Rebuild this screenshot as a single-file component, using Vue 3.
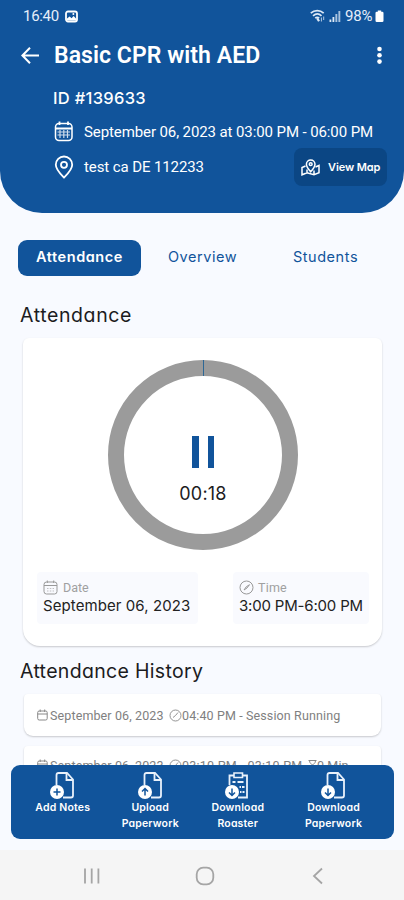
<script setup>
const tabs = ['Attendance', 'Overview', 'Students']
const actions = [
  { key: 'notes', lines: ['Add Notes'] },
  { key: 'upload', lines: ['Upload', 'Paperwork'] },
  { key: 'roaster', lines: ['Download', 'Roaster'] },
  { key: 'download', lines: ['Download', 'Paperwork'] },
]
const badge = {
  notes: 'M4.500 21h7M8 17.500v7',
  upload: 'M8 24.500v-7M5 20.500l3-3 3 3',
  roaster: 'M8 17.500v7M5 21.500l3 3 3-3',
  download: 'M8 17.500v7M5 21.500l3 3 3-3',
}
</script>

<template>
  <div class="screen">
    <header class="header">
      <div class="status">
        <span class="clock">16:40</span>
        <svg class="picture" width="13" height="13" viewBox="0 0 13 13">
          <rect x="1" y="1.500" width="11" height="10" rx="2" fill="none" stroke="#fff" stroke-width="1.800" />
          <path d="M2 10.500V8.600l2.600-2.100 2 1.800 2-2.200L11 8.500v2z" fill="#fff" />
          <circle cx="8.400" cy="4" r="1" fill="#fff" />
        </svg>
        <span class="grow"></span>
        <svg width="16" height="14" viewBox="0 0 16 14" fill="none" stroke="#dce8f6" stroke-width="1.700">
          <path d="M.8 4.200C4.500.7 10 .7 13.700 4.200M3 6.800c2.600-2.300 6-2.300 8.500 0M5.200 9.200c1.300-1.100 2.800-1.100 4 0" />
          <path d="M7.200 9.200 9 12.200" stroke-width="2.200" />
          <path d="M11.400 12.500V8.500M13.700 7.500V11" stroke-width="1" opacity=".8" />
        </svg>
        <svg class="signal" width="12" height="12" viewBox="0 0 12 12" fill="#dce8f6">
          <path d="M.5 9.400h1.800V12H.5zM3.500 7h1.800v5H3.500z" />
          <path d="M6.400 4h1.900v8H6.400zM9.400 1h1.900v11H9.400z" opacity=".75" />
        </svg>
        <span class="percent">98%</span>
        <svg class="battery" width="9" height="13" viewBox="0 0 9 13" fill="#fff">
          <path d="M2.800.5h3.400v1.300h1A1.300 1.300 0 0 1 8.500 3.100v7.600A1.300 1.300 0 0 1 7.200 12H1.800A1.300 1.300 0 0 1 .5 10.700V3.100A1.300 1.300 0 0 1 1.800 1.800h1z" />
        </svg>
      </div>
      <div class="titlebar">
        <svg width="20" height="20" viewBox="0 0 20 20" fill="none" stroke="#fff" stroke-width="2">
          <path d="M18 9.500H2M9 1.800 1.400 9.500 9 17.200" />
        </svg>
        <h1>Basic CPR with AED</h1>
        <svg class="more" width="6" height="20" viewBox="0 0 6 20" fill="#fff">
          <circle cx="3.500" cy="3" r="2.300" /><circle cx="3.500" cy="9.300" r="2.300" /><circle cx="3.500" cy="15.600" r="2.300" />
        </svg>
      </div>
      <div class="code geo">ID #139633</div>
      <div class="info">
        <svg width="20" height="21" viewBox="0 0 20 21" fill="none" stroke="#fff">
          <rect x="1.500" y="2.500" width="16.500" height="17" rx="3.500" stroke-width="1.500" />
          <path d="M1.500 7.500h16.500M5.500.5v3.500M14 .5v3.500" stroke-width="1.800" />
          <path d="M3.500 11h12.500M3.500 14h12.500M6 9v8M9.800 9v8M13.500 9v8" stroke-width="1.200" opacity=".8" />
        </svg>
        <span class="when">September 06, 2023 at 03:00 PM - 06:00 PM</span>
      </div>
      <div class="info place">
        <svg width="20" height="24" viewBox="0 0 20 24" fill="none" stroke="#fff" stroke-width="1.800">
          <path d="M10 22.500C6 18.500 1.800 14.500 1.800 9.700a8.200 8.200 0 0 1 16.400 0c0 4.800-4.200 8.800-8.200 12.800z" />
          <circle cx="10" cy="9.800" r="3" />
        </svg>
        <span class="where">test ca DE 112233</span>
        <button class="map">
          <svg width="19" height="17" viewBox="0 0 19 17" fill="none" stroke="#fff" stroke-width="1.500">
            <path d="M4.500 7 1 8.500v7.300l5-2 7 2 5-2V6.500L14.500 8M6 10.500v3.300M13 11.500v4.300" />
            <path d="M9.700 12.800C7.500 10.300 5.400 8 5.400 5.200a4.300 4.300 0 0 1 8.600 0c0 2.800-2.100 5.100-4.300 7.600z" />
            <circle cx="9.700" cy="5.200" r="1.400" />
          </svg>
          <span class="geo">View Map</span>
        </button>
      </div>
    </header>

    <main class="content">
      <nav class="tabs geo">
        <button v-for="(tab, i) in tabs" :key="tab" :class="['tab', { active: i === 0 }]">{{ tab }}</button>
      </nav>
      <h2 class="geo heading">Attendance</h2>
      <section class="card">
        <div class="timer">
          <div class="pause"><i></i><i></i></div>
          <div class="elapsed geo">00:18</div>
        </div>
        <div class="facts">
          <div class="fact date">
            <div class="label">
              <svg width="15" height="15" viewBox="0 0 15 15" fill="none" stroke="#999">
                <rect x="1" y="2" width="13" height="12" rx="2.500" />
                <path d="M1 5.500h13M4.300.5v2.500M10.700.5v2.500" />
                <path d="M4 8.500h7M4 11h7" stroke-dasharray="1.500 1.300" opacity=".6" />
              </svg>
              <span>Date</span>
            </div>
            <div class="value">September 06, 2023</div>
          </div>
          <div class="fact time">
            <div class="label">
              <svg width="15" height="15" viewBox="0 0 15 15" fill="none" stroke="#999">
                <circle cx="7.500" cy="7.500" r="6.500" />
                <path d="m5 10 2.200-3.200L10.500 4.700 8 8z" />
              </svg>
              <span>Time</span>
            </div>
            <div class="value">3:00 PM-6:00 PM</div>
          </div>
        </div>
      </section>
      <h2 class="geo heading history">Attendance History</h2>
      <div class="entry">
        <svg class="cal" width="11" height="12" viewBox="0 0 11 12" fill="none" stroke="#888"><rect x=".7" y="2" width="9.500" height="9" rx="1.500" /><path d="M.7 5h9.500M3.200.5V3M7.700.5V3" /></svg>
        <span class="day">September 06, 2023</span>
        <svg class="clk" width="13" height="13" viewBox="0 0 13 13" fill="none" stroke="#888" stroke-width=".9"><circle cx="6.500" cy="6.500" r="5.500" /><path d="M9 3.500 6.500 6.500 4 8.500" /></svg>
        <span class="state">04:40 PM - Session Running</span>
      </div>
      <div class="entry second">
        <svg class="cal" width="11" height="12" viewBox="0 0 11 12" fill="none" stroke="#888"><rect x=".7" y="2" width="9.500" height="9" rx="1.500" /><path d="M.7 5h9.500M3.200.5V3M7.700.5V3" /></svg>
        <span class="day">September 06, 2023</span>
        <svg class="clk" width="13" height="13" viewBox="0 0 13 13" fill="none" stroke="#888" stroke-width=".9"><circle cx="6.500" cy="6.500" r="5.500" /><path d="M9 3.500 6.500 6.500 4 8.500" /></svg>
        <span class="state range">03:10 PM - 03:10 PM</span>
        <svg class="glass" width="9" height="12" viewBox="0 0 9 12" fill="none" stroke="#888"><path d="M.5 1.500h8M.5 10.500h8M1.500 1.500c0 3 2 3.500 3 4.500 1-1 3-1.500 3-4.500M1.500 10.500c0-3 2-3.500 3-4.500 1 1 3 1.500 3 4.500" /></svg>
        <span class="state">0 Min</span>
      </div>
    </main>

    <div class="actions geo">
      <button v-for="a in actions" :key="a.key" :class="['action', a.key]">
        <svg width="26" height="28" viewBox="0 0 26 28" fill="none" stroke="#e9f1fb" stroke-width="1.800">
          <template v-if="a.key === 'roaster'">
            <path d="M5.500 14V4.500h17.500V26.500H14" />
            <path d="M10 2h8.500v4.500H10z" fill="#11549b" stroke-width="1.600" />
            <path d="M8.500 11h3M13.500 11h6M15.500 16h1.500M18 16h2.500M16 21h1.500M18.500 21h2" stroke-width="2" />
          </template>
          <template v-else>
            <path d="M7.500 14V4q0-2 2-2h8.500l6 6.500v16q0 2-2 2H14" />
            <path d="M17.500 2v7h6.500" />
          </template>
          <circle cx="8" cy="21" r="7" fill="#fff" stroke="none" />
          <path :d="badge[a.key]" stroke="#11549b" stroke-width="1.500" />
        </svg>
        <span v-for="line in a.lines" :key="line" class="caption">{{ line }}</span>
      </button>
    </div>

    <footer class="system">
      <svg width="18" height="18" viewBox="0 0 18 18" stroke="#a5a5a5" stroke-width="1.800"><path d="M2 1.500v15M8.700 1.500v15M15.400 1.500v15" /></svg>
      <svg width="20" height="20" viewBox="0 0 20 20" fill="none" stroke="#a5a5a5" stroke-width="1.800"><rect x="1.700" y="1.700" width="16.600" height="16.600" rx="6.500" /></svg>
      <svg width="12" height="18" viewBox="0 0 12 18" fill="none" stroke="#a5a5a5" stroke-width="1.800"><path d="M10 1.500 2 9l8 7.500" /></svg>
    </footer>
  </div>
</template>

<style>
body { margin: 0; background: #f8faff; }
</style>

<style scoped>
* { box-sizing: border-box; }
.screen { position: relative; width: 404px; height: 900px; display: flex; flex-direction: column; overflow: hidden; background: #f8faff; font-family: Roboto, sans-serif; }
svg { display: block; flex: none; }
button { border: 0; padding: 0; margin: 0; background: none; font: inherit; color: inherit; letter-spacing: inherit; }
h1, h2 { margin: 0; }
span, .value, .heading, .code { white-space: nowrap; }
.geo { font-family: Inter, sans-serif; font-feature-settings: "cv11" 1; }

.header { flex: none; height: 213px; background: #11549b; color: #fff; border-radius: 0 0 42px 42px; }
.status { display: flex; align-items: center; height: 32px; padding: 0 20px 0 23px; font-size: 15px; color: #e6eefa; }
.clock { width: 42px; letter-spacing: -.3px; }
.grow { flex: 1; }
.signal { margin: 0 4px 0 3px; }
.percent { width: 30px; letter-spacing: -.2px; }
.titlebar { display: flex; align-items: center; height: 46px; padding: 1px 22px 0 21px; }
.titlebar h1 { flex: 1; margin-left: 13px; font-size: 23px; font-weight: 600; line-height: 28px; letter-spacing: .06px; }
.code { height: 40px; padding-left: 53px; font-size: 16.500px; font-weight: 500; line-height: 40px; letter-spacing: .3px; }
.info { display: flex; align-items: center; height: 27px; padding-left: 54px; font-size: 15px; letter-spacing: -.1px; }
.info > span { margin-left: 10px; }
.place { height: 38px; margin-top: 3px; padding-right: 17px; }
.map { display: flex; align-items: center; gap: 8px; width: 93px; height: 38px; margin-left: auto; padding-left: 7px; border-radius: 8px; background: #0b4684; font-size: 11px; font-weight: 600; }

.content { flex: 1; min-height: 0; overflow: hidden; padding-top: 27px; }
.tabs { display: grid; grid-template-columns: 123px 123px 123px; height: 36px; margin-left: 18px; color: #11549b; font-size: 14.500px; line-height: 32px; text-align: center; letter-spacing: .55px; }
.tab { padding-bottom: 3px; }
.tab.active { border-radius: 9px; background: #11549b; color: #fff; font-weight: 600; }
.heading { height: 62px; padding-left: 20px; color: #1c1c1e; font-size: 19.500px; font-weight: 400; line-height: 79px; letter-spacing: .6px; }
.card { width: 359px; height: 308px; margin-left: 23px; padding-top: 22px; border-radius: 6px 6px 17px 17px; background: #fff; box-shadow: 0 1px 2px rgba(0, 0, 0, .2); }
.timer { position: relative; display: flex; flex-direction: column; align-items: center; width: 190px; height: 190px; margin-left: 85px; padding-top: 60px; border: 16px solid #9b9b9b; border-radius: 50%; }
.timer::before { content: ""; position: absolute; left: 79px; top: -16px; width: 1px; height: 16px; background: #2d6795; }
.pause { display: flex; gap: 9px; }
.pause i { width: 6.500px; height: 32px; background: #11549b; }
.elapsed { margin-top: 15px; color: #1c1c1e; font-size: 18px; line-height: 22px; letter-spacing: .2px; }
.facts { display: flex; justify-content: space-between; margin-top: 22px; padding: 0 13px 0 14px; }
.fact { height: 52px; padding: 8px 0 0 6px; border-radius: 4px; background: #f9fafe; color: #222; }
.date { width: 161px; }
.time { width: 136px; }
.label { display: flex; align-items: center; gap: 5px; height: 15px; color: #a0a0a0; font-size: 12.500px; }
.time .label { gap: 4px; letter-spacing: .2px; }
.value { font-family: Inter, sans-serif; font-size: 15px; line-height: 21px; letter-spacing: .08px; }
.time .value { letter-spacing: -.18px; }
.history { height: 48px; line-height: 50px; letter-spacing: .32px; }
.entry { display: flex; align-items: center; width: 357px; height: 42px; margin-left: 24px; padding-left: 13px; border-radius: 4px 4px 9px 9px; background: #fff; box-shadow: 0 1px 2px rgba(0, 0, 0, .2); color: #808080; font-size: 12.500px; letter-spacing: .12px; }
.second { margin-top: 10px; padding-bottom: 4px; }
.day { width: 119px; margin-left: 2px; }
.range { width: 126px; letter-spacing: .25px; }

.actions { position: absolute; left: 11px; top: 765px; display: grid; grid-template-columns: 87.500px 87.500px 87.500px 104px; width: 383px; height: 74px; padding: 6px 0 0 8px; border-radius: 9px; background: #11549b; color: #fff; font-size: 10.500px; font-weight: 600; letter-spacing: .18px; }
.action { display: flex; flex-direction: column; align-items: center; }
.action svg { margin: 0 1px 1px 0; }
.caption { line-height: 15.500px; }
.system { flex: none; display: flex; align-items: center; justify-content: space-between; height: 50px; padding: 2px 80px 0 83px; background: #f5f5f5; }
.system svg:nth-child(2) { margin-right: 4px; }
</style>
